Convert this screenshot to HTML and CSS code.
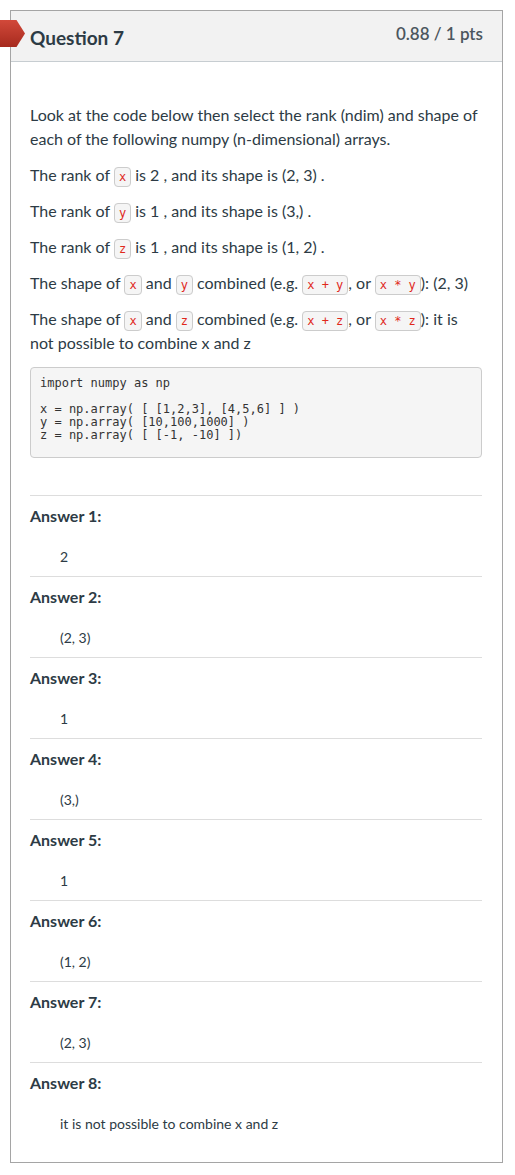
FILE: index.html
```html
<!DOCTYPE html>
<html lang="en">
<head>
<meta charset="utf-8">
<title>Question 7</title>
<link rel="stylesheet" href="styles.css">
</head>
<body>
<div class="card">
  <div class="flag"></div>
  <div class="header">
    <span class="title">Question 7</span>
    <span class="pts">0.88 / 1 pts</span>
  </div>
  <div class="content">
    <p>Look at the code below then select the rank (ndim) and shape of each of the following numpy (n-dimensional) arrays.</p>
    <p>The rank of <code>x</code> is 2 , and its shape is (2, 3) .</p>
    <p>The rank of <code>y</code> is 1 , and its shape is (3,) .</p>
    <p>The rank of <code>z</code> is 1 , and its shape is (1, 2) .</p>
    <p>The shape of <code>x</code> and <code>y</code> combined (e.g. <code>x + y</code>, or <code>x * y</code>): (2, 3)</p>
    <p>The shape of <code>x</code> and <code>z</code> combined (e.g. <code>x + z</code>, or <code>x * z</code>): it is not possible to combine x and z</p>
    <pre class="codebox">import numpy as np

x = np.array( [ [1,2,3], [4,5,6] ] )
y = np.array( [10,100,1000] )
z = np.array( [ [-1, -10] ])</pre>
    <div class="answers">
      <div class="answer"><div class="label">Answer 1:</div><div class="value">2</div></div>
      <div class="answer"><div class="label">Answer 2:</div><div class="value">(2, 3)</div></div>
      <div class="answer"><div class="label">Answer 3:</div><div class="value">1</div></div>
      <div class="answer"><div class="label">Answer 4:</div><div class="value">(3,)</div></div>
      <div class="answer"><div class="label">Answer 5:</div><div class="value">1</div></div>
      <div class="answer"><div class="label">Answer 6:</div><div class="value">(1, 2)</div></div>
      <div class="answer"><div class="label">Answer 7:</div><div class="value">(2, 3)</div></div>
      <div class="answer last"><div class="label">Answer 8:</div><div class="value">it is not possible to combine x and z</div></div>
    </div>
  </div>
</div>
</body>
</html>
```
FILE: styles.css
```css
* { box-sizing: border-box; }
body {
  margin: 0;
  background: #fff;
  font-family: Lato, "Noto Sans", sans-serif;
  color: #2d3b45;
}
.card {
  position: relative;
  margin: 10px 0 0 10px;
  width: 493px;
  border: 1px solid #a5a5a5;
}
.flag {
  position: absolute;
  left: -11px;
  top: 9px;
  width: 25px;
  height: 27px;
  background: linear-gradient(#d2493a, #a62a1e);
  clip-path: polygon(0 0, 66% 0, 100% 50%, 66% 100%, 0 100%);
}
.header {
  height: 51px;
  background: #f2f2f2;
  border-bottom: 1px solid #c7cdd1;
  display: flex;
  justify-content: space-between;
  align-items: flex-start;
  padding: 0 19px;
}
.title {
  font-weight: 700;
  font-size: 19px;
  margin-top: 14px;
  line-height: 26px;
}
.pts {
  font-weight: 600;
  font-size: 17px;
  color: #4c565e;
  margin-top: 12px;
  line-height: 22px;
}
.content {
  padding: 41px 20px 0 19px;
}
.content p {
  margin: 0 0 12px;
  font-size: 16px;
  line-height: 24px;
}
code {
  font-family: "DejaVu Sans Mono", monospace;
  font-size: 12px;
  line-height: 1;
  color: #e0271b;
  background: #f5f5f5;
  border: 1px solid #ccc;
  border-radius: 4px;
  padding: 2px 4px;
}
.codebox {
  margin: 0;
  font-family: "DejaVu Sans Mono", monospace;
  font-size: 12px;
  line-height: 13px;
  color: #333;
  background: #f5f5f5;
  border: 1px solid #ccc;
  border-radius: 4px;
  padding: 9px 9px 15px;
}
.answers {
  margin-top: 37px;
}
.answer {
  border-top: 1px solid #ddd;
  padding: 10px 0 9px;
}
.answer.last { padding-bottom: 28px; }
.label {
  font-weight: 700;
  font-size: 16px;
  line-height: 20px;
}
.value {
  margin-top: 21px;
  padding-left: 30px;
  font-size: 14px;
  line-height: 20px;
}
```
